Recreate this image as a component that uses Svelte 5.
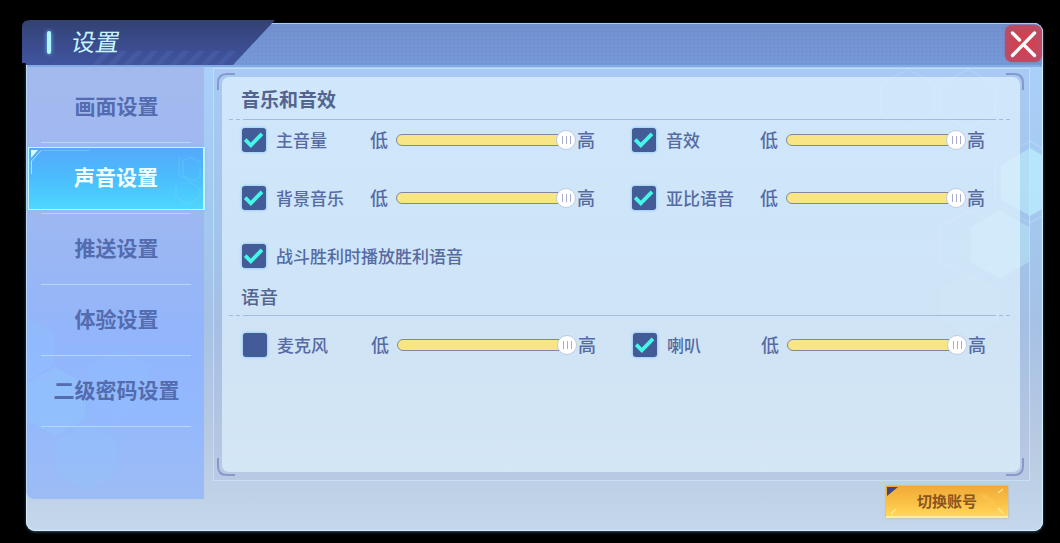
<script lang="ts">
  type Control = {
    id: string;
    label: string;
    checked: boolean;
    volume?: number;
  };

  const tabs = ['画面设置', '声音设置', '推送设置', '体验设置', '二级密码设置'];
  let activeTab = $state('声音设置');

  let sound = $state<Control[]>([
    { id: 'master', label: '主音量', checked: true, volume: 100 },
    { id: 'effects', label: '音效', checked: true, volume: 100 },
    { id: 'music', label: '背景音乐', checked: true, volume: 100 },
    { id: 'yabi', label: '亚比语音', checked: true, volume: 100 },
    { id: 'victory', label: '战斗胜利时播放胜利语音', checked: true },
  ]);

  let voice = $state<Control[]>([
    { id: 'mic', label: '麦克风', checked: false, volume: 100 },
    { id: 'speaker', label: '喇叭', checked: true, volume: 100 },
  ]);
</script>

{#snippet rule()}
  <div class="rule"><i></i><i></i><span></span><i></i><i></i></div>
{/snippet}

{#snippet control(item: Control)}
  <div class="control" class:wide={item.volume === undefined}>
    <button
      class="checkbox"
      role="checkbox"
      aria-checked={item.checked}
      aria-label={item.label}
      onclick={() => (item.checked = !item.checked)}
    >
      {#if item.checked}
        <svg viewBox="0 0 24 24" width="24" height="24">
          <path d="M3.2 11.7 8.8 17.3 20 5.9" fill="none" stroke="#45f7e6" stroke-width="3.8" />
        </svg>
      {/if}
    </button>
    <span class="label">{item.label}</span>
    {#if item.volume !== undefined}
      <span class="bound">低</span>
      <div class="slider">
        <div class="track"></div>
        <div class="knob" style="left: {item.volume}%"><i></i><i></i><i></i></div>
      </div>
      <span class="bound">高</span>
    {/if}
  </div>
{/snippet}

<div class="screen">
  <div class="window">
    <svg class="hexes" viewBox="0 0 1017 508" width="1017" height="508">
      <g fill="#bdf4ff">
        <path d="M1004 125 1016 132V186L1004 193 975 176V142Z" opacity=".65" />
        <path d="M974 187 1003 204V239L974 256 945 239V204Z" opacity=".5" />
        <path d="M944 250 973 266V298L944 315 915 298V266Z" opacity=".2" />
      </g>
      <g fill="none" stroke="#c9e8ff" stroke-width="1.5" opacity=".32">
        <path d="M882 46 908 61V91L882 106 855 91V61Z" />
        <path d="M942 46 969 61V91L942 106 915 91V61Z" />
        <path d="M1016 125 1004 118 969 138V180L1004 200 1016 193" />
        <path d="M944 187 974 204V239L944 256 914 239V204Z" />
      </g>
    </svg>

    <header>
      <div class="title">
        <svg class="title-shape" viewBox="0 0 254 46" width="254" height="46">
          <defs>
            <linearGradient id="titleFill" x1="0" y1="0" x2="0" y2="1">
              <stop offset="0" stop-color="#33416f" />
              <stop offset=".3" stop-color="#374783" />
              <stop offset="1" stop-color="#40559f" />
            </linearGradient>
          </defs>
          <path d="M8 0H253L211 45H4V43H0V7Q0 0 8 0Z" fill="url(#titleFill)" />
          <g fill="#4a60a9" opacity=".6">
            {#each Array(9) as _, i}
              <path d="M{70 + i * 15.5} 45l13 -14h7l-13 14z" />
            {/each}
          </g>
        </svg>
        <span class="title-bar"></span>
        <h1>设置</h1>
      </div>
      <button class="close" aria-label="关闭">
        <svg viewBox="0 0 37 37" width="37" height="37" fill="none" stroke="#f1ffff" stroke-width="3.4" stroke-linecap="round">
          <path d="M7.5 8 14.5 15M19 20 29.5 30.5M29.5 8 7.5 30.5" />
        </svg>
      </button>
    </header>

    <div class="body">
      <nav>
        <svg class="nav-hexes" viewBox="0 0 178 432" width="178" height="432" fill="#8fcbff">
          <path d="M0 250 27 266V298L0 314Z" opacity=".25" />
          <path d="M28 300 58 317V352L28 369 0 353V316Z" opacity=".35" />
          <path d="M92 282 122 299V333L92 350 62 333V299Z" opacity=".16" />
          <path d="M60 356 90 373V407L60 424 30 407V373Z" opacity=".16" />
        </svg>
        {#each tabs as tab}
          <button class="tab" class:active={tab === activeTab} onclick={() => (activeTab = tab)}>
            <span class="tab-face">
              {tab}
              {#if tab === activeTab}
                <svg class="tab-art" viewBox="0 0 177 62" width="177" height="62">
                  <path d="M3 3H10L3 11Z" fill="#d6fbff" />
                  <path d="M3.5 27V14L13 3.5" fill="none" stroke="#a2e8ff" stroke-width="1" />
                  <path d="M13 3.5H62" stroke="#7dccff" opacity=".6" />
                  <g fill="none" stroke="#8be0ff" opacity=".28">
                    <path d="M151 10V28L160 33M155 14 163 10 173 16M155 14V28L165 34 172 30V22" />
                    <path d="M160 34 172 42V50L160 57 148 50V38" />
                  </g>
                </svg>
              {/if}
            </span>
          </button>
        {/each}
      </nav>

      <div class="main">
        <div class="frame">
          <svg class="corners" viewBox="0 0 817 414" width="817" height="414" fill="none" stroke="#8799cb" stroke-width="2">
            <path d="M5 22V15Q5 6 14 6H22" />
            <path d="M793 6H801Q810 6 810 15V22" />
            <path d="M5 390V398Q5 407 14 407H22" />
            <path d="M793 407H801Q810 407 810 398V390" />
          </svg>
          <section class="panel">
            <h2>音乐和音效</h2>
            {@render rule()}
            <div class="controls">
              {#each sound as item (item.id)}
                {@render control(item)}
              {/each}
            </div>
            <h2 class="light">语音</h2>
            {@render rule()}
            <div class="controls voice">
              {#each voice as item (item.id)}
                {@render control(item)}
              {/each}
            </div>
          </section>
        </div>
        <button class="switch">
          <svg viewBox="0 0 122 32" width="122" height="32">
            <path d="M1 1H12L1 10Z" fill="#394a86" />
            <g fill="none" stroke="#ffe78f" stroke-width="1.6">
              <path d="M5 28 10 23M112 7 117 3M112 22 117 27" />
              <path d="M95 8 107 16 95 25" stroke="#ffc95a" opacity=".4" stroke-width="4" />
            </g>
          </svg>
          <span>切换账号</span>
        </button>
      </div>
    </div>
  </div>
</div>

<style>
  :global(body) {
    background: #000;
  }

  button {
    padding: 0;
    border: 0;
    font: inherit;
    color: inherit;
  }

  h1,
  h2 {
    margin: 0;
  }

  .screen {
    box-sizing: border-box;
    width: 1060px;
    height: 543px;
    padding: 23px 17px 12px 26px;
    overflow: hidden;
    background: #000;
    font-family: 'Noto Sans CJK SC', sans-serif;
  }

  .window {
    position: relative;
    display: flex;
    flex-direction: column;
    width: 1017px;
    height: 508px;
    border-radius: 9px;
    background: linear-gradient(#aacff9 43px, #a3c8ee 200px, #a6c1e5 300px, #b9cae2 420px, #c4d7eb 508px);
    box-shadow: inset 0 0 1px 1px #d5efff, 0 1px 3px #36506a;
  }

  .hexes {
    position: absolute;
    inset: 0;
  }

  header {
    position: relative;
    box-sizing: border-box;
    display: flex;
    justify-content: space-between;
    height: 44px;
    margin: 0 1px;
    border-top: 1px solid #a9cdf2;
    border-bottom: 2px solid #85abe5;
    border-radius: 8px 8px 0 0;
    background:
      repeating-linear-gradient(90deg, transparent 0 3px, rgb(70 105 175 / 7%) 3px 4px),
      repeating-linear-gradient(transparent 0 3px, rgb(70 105 175 / 7%) 3px 4px),
      linear-gradient(#7390ce, #779ad9);
  }

  .title {
    position: relative;
    display: flex;
    align-items: center;
    height: 36px;
    padding-left: 20px;
  }

  .title-shape {
    position: absolute;
    left: -5px;
    top: -4px;
  }

  .title-bar {
    position: relative;
    width: 4px;
    height: 23px;
    margin-right: 21px;
    border-radius: 2px;
    background: #b0f4ff;
    box-shadow: 0 0 4px #6fc0ff;
  }

  h1 {
    position: relative;
    top: -1px;
    font-size: 24px;
    font-weight: 400;
    line-height: 36px;
    color: #c5f6ff;
    transform: skewX(-10deg);
  }

  .close {
    width: 37px;
    height: 37px;
    margin: 1px 0 0;
    border-radius: 7px;
    background: radial-gradient(#d4404e 25%, #b94d66 75%);
    box-shadow: 0 0 2px #b75475;
  }

  .close svg,
  .checkbox svg {
    display: block;
  }

  .body {
    position: relative;
    display: flex;
    flex: 1;
  }

  nav {
    position: relative;
    box-sizing: border-box;
    width: 178px;
    height: 432px;
    padding-top: 5px;
    border-left: 1px solid #b9d8fa;
    border-radius: 0 0 0 7px;
    background: linear-gradient(#a4baee, #9bb7f3 180px, #92b5fb 270px, #92b8fd 340px, #9dbcf5);
  }

  .nav-hexes {
    position: absolute;
    left: 0;
    top: 0;
  }

  .tab {
    position: relative;
    display: flex;
    width: 100%;
    height: 71px;
    background: linear-gradient(#b4d6ff, #b4d6ff) 14px 70px / 150px 1px no-repeat;
    color: #536baf;
    font-size: 21px;
    font-weight: 700;
  }

  .tab-face {
    position: relative;
    box-sizing: border-box;
    width: 177px;
    height: 63px;
    margin: 4px -1px 0 1px;
    line-height: 58px;
    text-align: center;
    white-space: nowrap;
  }

  .active .tab-face {
    border: 1px solid #c2f5ff;
    border-right-width: 2px;
    background: linear-gradient(#55a9fb, #4bbdfd 50%, #4ed7ff);
    color: #f3ffff;
    line-height: 56px;
    box-shadow: 0 0 3px #79c6f5;
  }

  .tab-art {
    position: absolute;
    left: -1px;
    top: -1px;
  }

  .main {
    display: flex;
    flex-direction: column;
    align-items: flex-end;
    width: 826px;
    padding-top: 1px;
  }

  .frame {
    position: relative;
    box-sizing: border-box;
    width: 817px;
    height: 413px;
    padding: 8px;
    border: 1px solid rgb(211 231 253 / 65%);
    background: rgb(161 184 222 / 18%);
  }

  .corners {
    position: absolute;
    left: -1px;
    top: -1px;
  }

  .panel {
    position: relative;
    box-sizing: border-box;
    width: 798px;
    height: 395px;
    padding: 7px 10px 0 7px;
    border-radius: 7px;
    background: linear-gradient(rgb(226 243 255 / 70%), rgb(224 243 253 / 70%));
  }

  h2 {
    height: 30px;
    padding: 0 0 5px 12px;
    font-size: 19px;
    font-weight: 700;
    line-height: 29px;
    color: #53648f;
  }

  h2.light {
    height: 26px;
    padding-bottom: 6px;
    font-size: 18.5px;
    font-weight: 500;
    line-height: 26px;
  }

  .rule {
    display: flex;
    gap: 3px;
    height: 1px;
    width: 781px;
  }

  .rule i {
    width: 4px;
    background: #a1bddb;
  }

  .rule span {
    flex: 1;
    background: #a1bddb;
  }

  .controls {
    display: grid;
    grid-template-columns: 390px 390px;
    grid-auto-rows: 24px;
    row-gap: 34px;
    padding: 8px 0 15px 13px;
  }

  .voice {
    padding: 17px 0 0 14px;
  }

  .control {
    display: flex;
    align-items: center;
    color: #566aa3;
    font-weight: 500;
  }

  .checkbox {
    flex: none;
    width: 24px;
    height: 24px;
    border-radius: 3px;
    background: #435b97;
    box-shadow: 0 0 3px #6bbdf0;
  }

  .label {
    width: 94px;
    margin-left: 10px;
    font-size: 17px;
    line-height: 24px;
    white-space: nowrap;
  }

  .wide .label {
    width: auto;
  }

  .bound {
    width: 18px;
    margin-top: -2px;
    font-size: 18px;
    line-height: 24px;
  }

  .slider {
    position: relative;
    width: 170px;
    margin: 0 11px 0 8px;
  }

  .track {
    box-sizing: border-box;
    height: 12px;
    border: 1px solid #7f8998;
    border-radius: 6px;
    background: #f8e686;
  }

  .knob {
    position: absolute;
    top: -4px;
    box-sizing: border-box;
    display: flex;
    align-items: center;
    justify-content: center;
    gap: 3px;
    width: 20px;
    height: 20px;
    margin-left: -10px;
    border: 1px solid #bccbe4;
    border-radius: 50%;
    background: #fff;
  }

  .knob i {
    width: 1px;
    height: 8px;
    background: #a9adcb;
  }

  .switch {
    position: relative;
    box-sizing: border-box;
    width: 122px;
    height: 32px;
    margin: 5px 22px 0 0;
    border-bottom: 2px solid #fff0a0;
    background: linear-gradient(#f0a937, #fbc348 60%, #ffd75a);
    box-shadow: 0 0 2px #c8a668;
    color: #8a5520;
    font-size: 15px;
    font-weight: 700;
    line-height: 30px;
  }

  .switch svg {
    position: absolute;
    left: 0;
    top: 0;
  }

  .switch span {
    position: relative;
  }
</style>
